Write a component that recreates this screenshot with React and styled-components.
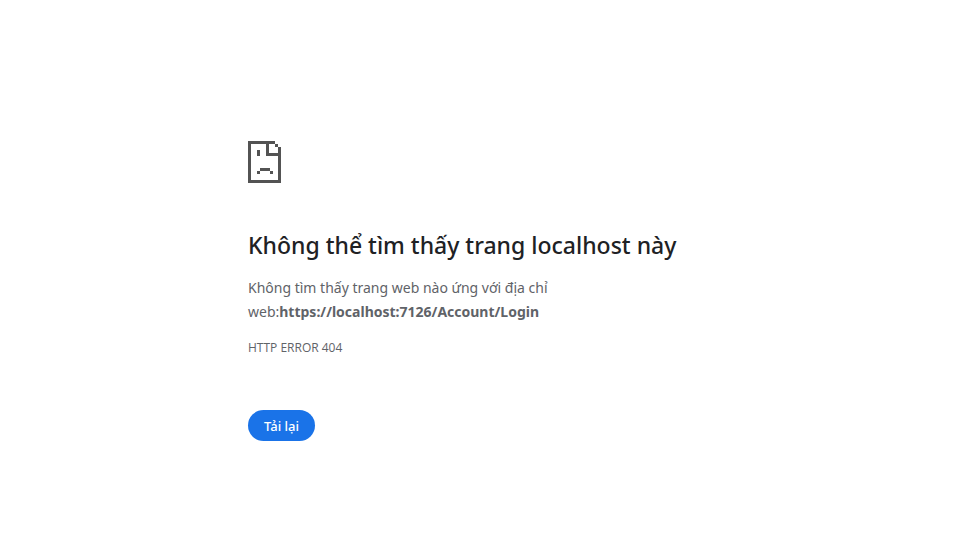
import React from 'react';
import styled, { createGlobalStyle } from 'styled-components';

const GlobalStyle = createGlobalStyle`
  body {
    margin: 0;
    background: #fff;
    color: #5f6368;
    font-family: 'Noto Sans', sans-serif;
    font-size: 14px;
    line-height: 24px;
  }
`;

const Page = styled.main`
  box-sizing: border-box;
  max-width: 509px;
  margin: 0 auto;
  padding: 141px 24px 24px;
  display: flex;
  flex-direction: column;
  align-items: flex-start;
`;

const FileIcon = styled.svg`
  display: block;
  width: 33px;
  height: 42px;
  fill: #535353;
`;

const Title = styled.h1`
  margin: 48px 0 16px;
  color: #202124;
  font-size: 23px;
  font-weight: 500;
  line-height: 29px;
`;

const Summary = styled.p`
  margin: 0;
  max-width: 340px;
`;

const ErrorCode = styled.p`
  margin: 12px 0 0;
  font-family: 'Open Sans', sans-serif;
  font-size: 12px;
`;

const ReloadButton = styled.button`
  margin-top: 50px;
  padding: 0 16px;
  height: 31px;
  border: 0;
  border-radius: 16px;
  background: #1a73e8;
  color: #fff;
  font: 500 13px 'Noto Sans', sans-serif;
  cursor: pointer;
`;

export default function App() {
  return (
    <>
      <GlobalStyle />
      <Page>
        <FileIcon viewBox="0 0 33 42" shapeRendering="crispEdges" aria-hidden="true">
          <path d="M0 0h27v3H3v36h27V15H18V3h3v9h12v30H0zM27 3h3v3h-3zM30 6h3v6h-3zM9 9h3v6H9zM12 27h10v3H12zM9 30h3v3H9zM22 30h3v3h-3z" />
        </FileIcon>
        <Title>Không thể tìm thấy trang localhost này</Title>
        <Summary>
          Không tìm thấy trang web nào ứng với địa chỉ web:
          <strong>https://localhost:7126/Account/Login</strong>
        </Summary>
        <ErrorCode>HTTP ERROR 404</ErrorCode>
        <ReloadButton type="button">Tải lại</ReloadButton>
      </Page>
    </>
  );
}
